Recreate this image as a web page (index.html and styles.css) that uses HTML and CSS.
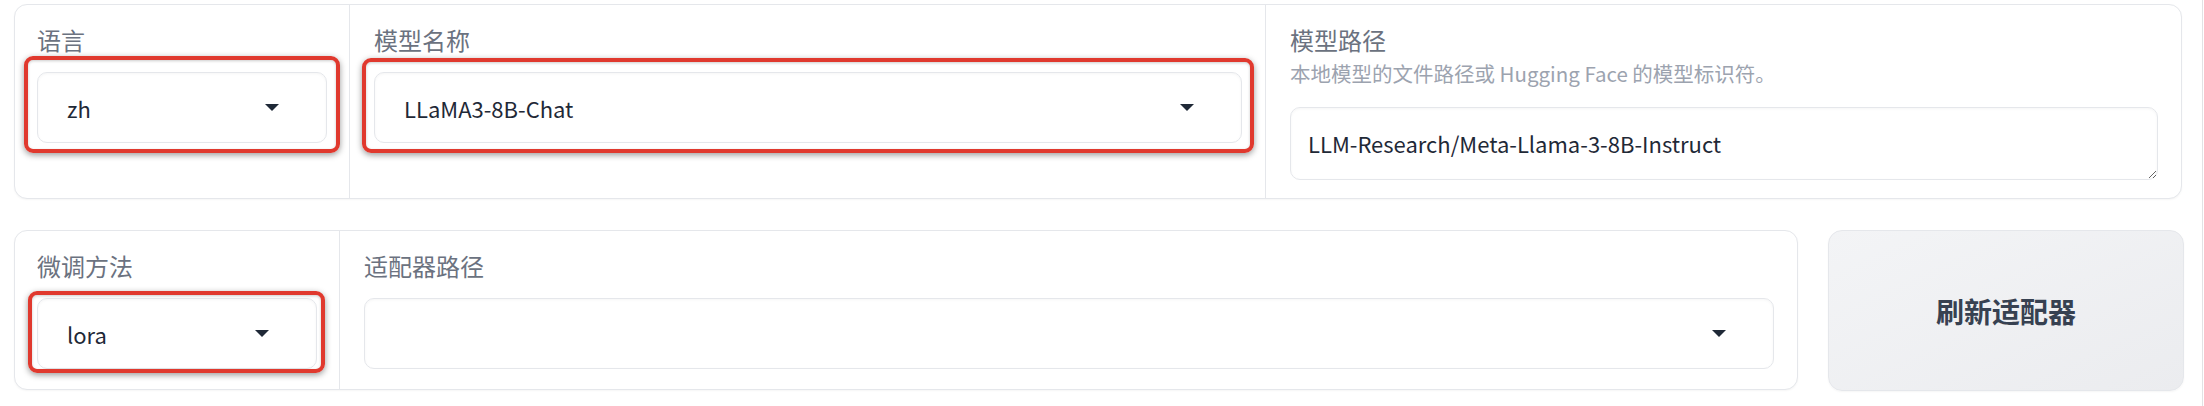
FILE: index.html
```html
<!DOCTYPE html>
<html lang="zh">
<head>
<meta charset="utf-8">
<title>LLaMA Board</title>
<link rel="stylesheet" href="styles.css">
</head>
<body>
<div class="page">
  <div class="main">
    <div class="box box-top">
      <div class="field">
        <div class="label">语言</div>
        <div class="select mark mark-lang">
          <span class="value">zh</span>
          <svg class="caret" width="14" height="7" viewBox="0 0 14 7"><path d="M0 0H14L7 7Z"/></svg>
        </div>
      </div>
      <div class="field">
        <div class="label">模型名称</div>
        <div class="select mark mark-model">
          <span class="value">LLaMA3-8B-Chat</span>
          <svg class="caret" width="14" height="7" viewBox="0 0 14 7"><path d="M0 0H14L7 7Z"/></svg>
        </div>
      </div>
      <div class="field">
        <div class="label">模型路径</div>
        <div class="desc">本地模型的文件路径或 Hugging Face 的模型标识符。</div>
        <textarea class="textarea" rows="1">LLM-Research/Meta-Llama-3-8B-Instruct</textarea>
      </div>
    </div>
    <div class="row-bottom">
      <div class="box box-bottom">
        <div class="field">
          <div class="label">微调方法</div>
          <div class="select mark mark-method">
            <span class="value">lora</span>
            <svg class="caret" width="14" height="7" viewBox="0 0 14 7"><path d="M0 0H14L7 7Z"/></svg>
          </div>
        </div>
        <div class="field">
          <div class="label">适配器路径</div>
          <div class="select">
            <span class="value"></span>
            <svg class="caret" width="14" height="7" viewBox="0 0 14 7"><path d="M0 0H14L7 7Z"/></svg>
          </div>
        </div>
      </div>
      <button class="btn">刷新适配器</button>
    </div>
  </div>
</div>
</body>
</html>
```

FILE: styles.css
```css
* { box-sizing: border-box; }

html, body {
  margin: 0;
  padding: 0;
  background: #ffffff;
}

body {
  font-family: "Noto Sans CJK SC", "Noto Sans", sans-serif;
  color: #1f2937;
}

.page {
  width: 2203px;
  height: 406px;
  padding: 4px 0 0 14px;
  border-right: 1px solid #e2e2e4;
}

.main {
  width: 2170px;
}

.box {
  background: #ffffff;
  border: 1px solid #e5e7eb;
  border-radius: 13px;
  box-shadow: 0 1px 2px rgba(0, 0, 0, 0.04);
}

.box-top {
  width: 2168px;
  height: 195px;
  display: grid;
  grid-template-columns: 334px 1fr 1fr;
}

.row-bottom {
  margin-top: 31px;
  display: flex;
  gap: 30px;
}

.box-bottom {
  flex: 1;
  height: 160px;
  display: grid;
  grid-template-columns: 324px 1fr;
}

.field {
  padding: 20px 22px 18px 22px;
  display: flex;
  flex-direction: column;
  min-width: 0;
}

.field + .field {
  border-left: 1px solid #e5e7eb;
  padding-left: 24px;
  padding-right: 23px;
}

.label {
  font-size: 24px;
  line-height: 30px;
  color: #6b7280;
  margin-bottom: 17px;
}

.desc {
  font-size: 20.5px;
  line-height: 30px;
  color: #9ca3af;
  margin-top: -14px;
  margin-bottom: 19px;
}

.select {
  position: relative;
  height: 71px;
  border: 1px solid #e5e7eb;
  border-radius: 10px;
  background: #ffffff;
  box-shadow: inset 0 1px 3px rgba(0, 0, 0, 0.04);
  display: flex;
  align-items: center;
  justify-content: space-between;
  padding: 0 47px 0 29px;
}

.value {
  font-size: 22px;
  line-height: 30px;
  color: #1f2937;
}

.caret {
  display: block;
  fill: #1f2937;
}

.textarea {
  display: block;
  width: 100%;
  height: 73px;
  border: 1px solid #e5e7eb;
  border-radius: 10px;
  background: #ffffff;
  box-shadow: inset 0 1px 3px rgba(0, 0, 0, 0.04);
  padding: 19px 17px;
  font-family: "Noto Sans CJK SC", "Noto Sans", sans-serif;
  font-size: 22px;
  line-height: 33px;
  color: #1f2937;
  resize: vertical;
  overflow: hidden;
  outline: none;
}

/* annotation marks drawn over the dropdowns */
.mark::after {
  content: "";
  position: absolute;
  border: 4px solid #e0392e;
  border-radius: 9px;
  box-shadow: 0 2px 6px rgba(0, 0, 0, 0.4), inset 0 1px 3px rgba(0, 0, 0, 0.2);
  pointer-events: none;
}

.mark-lang::after { top: -17px; right: -14px; bottom: -11px; left: -14px; }
.mark-model::after { top: -15px; right: -13px; bottom: -11px; left: -13px; }
.mark-method::after { top: -8px; right: -9px; bottom: -5px; left: -10px; }

.btn {
  width: 356px;
  height: 161px;
  border: 1px solid #e5e7eb;
  border-radius: 14px;
  background: linear-gradient(to bottom right, #f3f4f6, #ebecef);
  box-shadow: 0 1px 2px rgba(0, 0, 0, 0.04);
  font-family: "Noto Sans CJK SC", "Noto Sans", sans-serif;
  font-size: 28px;
  font-weight: 700;
  color: #374151;
  padding: 0;
  cursor: pointer;
}
```
